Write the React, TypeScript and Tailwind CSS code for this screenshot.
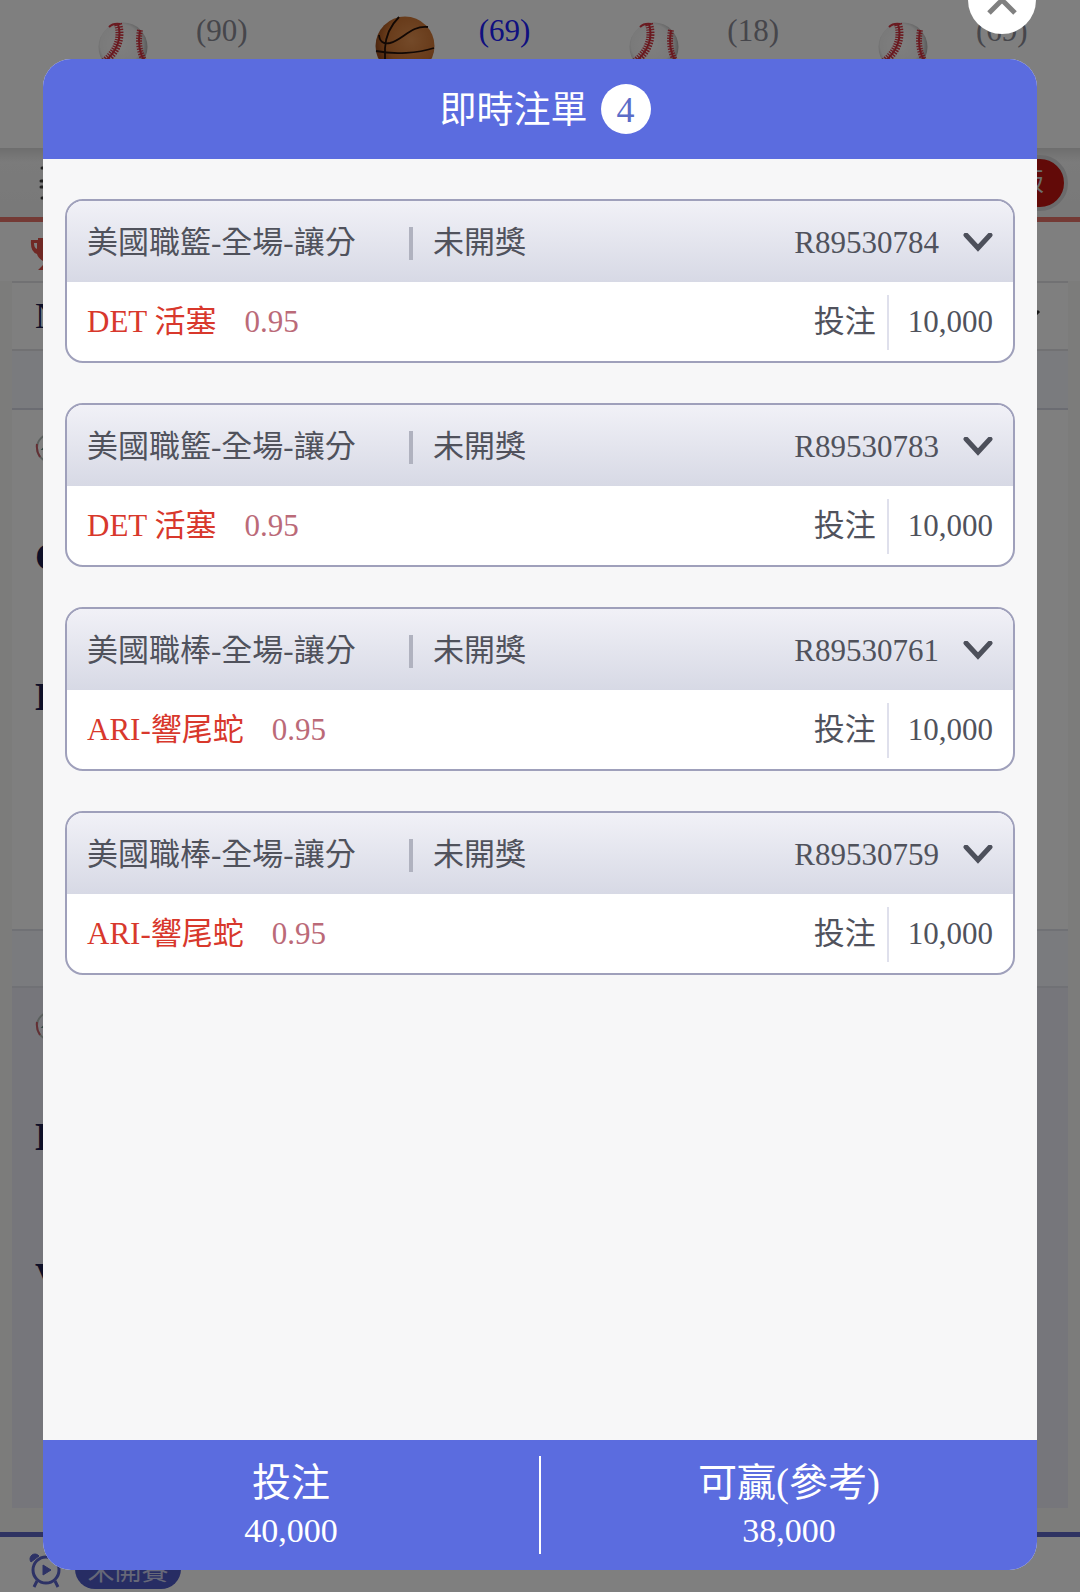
import React from "react";

const bets = [
  { id: "R89530784", title: "美國職籃-全場-讓分", team: "DET 活塞", odds: "0.95", amount: "10,000" },
  { id: "R89530783", title: "美國職籃-全場-讓分", team: "DET 活塞", odds: "0.95", amount: "10,000" },
  { id: "R89530761", title: "美國職棒-全場-讓分", team: "ARI-響尾蛇", odds: "0.95", amount: "10,000" },
  { id: "R89530759", title: "美國職棒-全場-讓分", team: "ARI-響尾蛇", odds: "0.95", amount: "10,000" },
];

function Baseball() {
  return (
    <svg viewBox="0 0 50 50" className="mt-[22px] size-[50px] shrink-0" aria-hidden="true">
      <defs>
        <radialGradient id="baseball" cx="45%" cy="45%" r="55%">
          <stop offset="0" stopColor="#fff" />
          <stop offset="0.75" stopColor="#f4f4f4" />
          <stop offset="1" stopColor="#b4b4b4" />
        </radialGradient>
      </defs>
      <circle cx="25" cy="25" r="24.5" fill="url(#baseball)" />
      <g fill="none" stroke="#d43440">
        <path d="M11 5 Q15 1 22 2" strokeWidth="2" />
        <path d="M20 2 C24 15 20 29 6 40" strokeWidth="2" />
        <path d="M20 2 C24 15 20 29 6 40" strokeWidth="8" strokeDasharray="1.4 1.2" />
        <path d="M42 8 C40 19 41 31 47 40" strokeWidth="2" />
        <path d="M42 8 C40 19 41 31 47 40" strokeWidth="6" strokeDasharray="1.4 1.2" />
      </g>
    </svg>
  );
}

function Basketball() {
  return (
    <svg viewBox="0 0 60 60" className="mt-4 size-[60px] shrink-0" aria-hidden="true">
      <defs>
        <radialGradient id="basketball" cx="60%" cy="40%" r="60%">
          <stop offset="0" stopColor="#e89452" />
          <stop offset="0.7" stopColor="#d07634" />
          <stop offset="1" stopColor="#9a4c1c" />
        </radialGradient>
      </defs>
      <circle cx="30" cy="30" r="29.5" fill="url(#basketball)" />
      <g fill="none" stroke="#241008" strokeWidth="1.8">
        <path d="M24 1 Q11 14 10 32 V52" />
        <path d="M4 19 Q5 29 15 27 C28 24 36 9 53 11" />
        <path d="M1 35 C20 39 43 37 59 32" />
      </g>
    </svg>
  );
}

function TeamLogo() {
  return (
    <svg viewBox="0 0 32 32" className="size-8" aria-hidden="true">
      <circle cx="16" cy="16" r="14" fill="none" stroke="#b4beba" strokeWidth="2" />
      <path d="M2 12 Q1 19 5 25" fill="none" stroke="#c85c66" strokeWidth="2" />
      <path d="M16 9 L8 17 H14" fill="none" stroke="#6c9088" strokeWidth="2" />
    </svg>
  );
}

const sports = [
  { count: "(90)", ball: "baseball" },
  { count: "(69)", ball: "basketball" },
  { count: "(18)", ball: "baseball" },
  { count: "(69)", ball: "baseball" },
];

function SportTab({ count, ball }: { count: string; ball: string }) {
  const active = ball === "basketball";
  return (
    <div className={active ? "ml-7 flex gap-11" : "flex gap-12"}>
      {active ? <Basketball /> : <Baseball />}
      <span
        className={
          active
            ? "mt-[13px] text-[31px] leading-9 text-[#2020ff]"
            : "mt-[13px] text-[31px] leading-9 text-[#8c8c96]"
        }
      >
        {count}
      </span>
    </div>
  );
}

function Team({ name, className }: { name: string; className: string }) {
  return <div className={`${className} text-[40px] leading-[46px] font-bold text-[#1c2050]`}>{name}</div>;
}

// page behind the dialog
function Backdrop() {
  return (
    <div className="flex min-h-screen flex-col bg-[#f8f8f6]" aria-hidden="true">
      <div className="flex h-[148px] gap-[99px] overflow-hidden bg-white pl-[98px]">
        {sports.map((s, i) => (
          <SportTab key={i} count={s.count} ball={s.ball} />
        ))}
      </div>
      <div className="flex h-[74px] items-center justify-between border-b-[5px] border-[#e8756a] bg-linear-to-b from-[#dcdcdc] via-[#f6f6f6] via-20% to-[#f2f2f2] pr-3 pl-[39px]">
        <svg viewBox="0 0 32 34" className="h-[34px] w-8" fill="none" stroke="#444" strokeWidth="3" strokeLinecap="round">
          <path d="M3 2H30M2 15H30M2 21H30M3 32H30" />
        </svg>
        <span className="flex h-14 items-center rounded-full border-4 border-[#d6d6d8] bg-[#c41410] pr-5 pl-5 text-[26px] text-[#ddd]">
          版
        </span>
      </div>
      <div className="h-[59px] bg-white px-[30px] pt-[15px]">
        <svg viewBox="0 0 34 34" className="size-[34px]" fill="#e0524a">
          <path d="M8 1H26V13Q24 22 19 24V28H24V33H8L13 28V24Q8 21 7 17Q0 15 1 3H8Z" />
          <path d="M4 6H7V12Q4 11 4 6Z" fill="#fff" />
        </svg>
      </div>
      <div className="mx-3 flex h-[70px] items-center justify-between border-y-2 border-[#e2e2e6] bg-white pr-[27px] pl-[23px]">
        <span className="text-[36px] text-[#1c2050]">N</span>
        <svg viewBox="0 0 24 14" className="h-3.5 w-6" fill="none" stroke="#333" strokeWidth="3">
          <path d="M2 2L12 12L22 2" />
        </svg>
      </div>
      <div className="mx-3 h-[59px] border-b-2 border-[#d6d8e4] bg-[#f4f6fc]" />
      <div className="mx-3 h-[519px] bg-[#fefefe] pt-[22px] pl-[23px]">
        <TeamLogo />
        <Team name="C" className="mt-[70px]" />
        <Team name="D" className="mt-[94px]" />
      </div>
      <div className="mx-3 h-[59px] border-y-2 border-[#e0e2ea] bg-[#f4f6fc]" />
      <div className="mx-3 h-[520px] bg-[#ededf6] pt-[22px] pl-[23px]">
        <TeamLogo />
        <Team name="D" className="mt-[72px]" />
        <Team name="V" className="mt-[94px]" />
      </div>
      <div className="mt-6 flex flex-1 items-end gap-3 border-t-[5px] border-[#5e66c4] bg-white pb-[3px] pl-[29px]">
        <svg viewBox="0 0 34 36" className="h-9 w-[34px]" fill="none" stroke="#5a64cc" strokeWidth="3">
          <circle cx="17" cy="17" r="13" />
          <path d="M8 28L5 34M26 28L29 34" />
          <path d="M2 9A5 5 0 0 1 10 3ZM32 9A5 5 0 0 0 24 3Z" fill="#5a64cc" strokeWidth="1" />
          <path d="M14 12L22 17L14 22Z" fill="#5a64cc" strokeWidth="1" />
        </svg>
        <span className="flex h-10 w-[106px] items-center justify-center rounded-full bg-[#4e5ac8] pt-1 text-[27px] leading-9 text-[#ccd0f0]">
          未開賽
        </span>
      </div>
    </div>
  );
}

function BetCard({ bet }: { bet: (typeof bets)[number] }) {
  return (
    <li className="overflow-hidden rounded-[18px] border-2 border-[#9fa0bb] bg-white text-[31px] leading-9 text-[#50525c]">
      <div className="flex h-[81px] items-center bg-linear-to-b from-[#f1f1f7] to-[#d7d9e5] px-5 pt-[3px]">
        <h3 className="w-[322px]">{bet.title}</h3>
        <span className="h-[33px] w-1 bg-[#b0b2bf]" />
        <span className="ml-5">未開獎</span>
        <button type="button" className="ml-auto flex items-center gap-6">
          {bet.id}
          <svg
            viewBox="0 0 30 20"
            className="h-5 w-[30px]"
            fill="none"
            stroke="#4d505b"
            strokeWidth="5"
            strokeLinecap="round"
            aria-hidden="true"
          >
            <path d="M3 2L15 15L27 2" />
          </svg>
        </button>
      </div>
      <div className="flex h-[79px] items-center px-5 pt-px">
        <span className="text-[#d8382c]">{bet.team}</span>
        <span className="ml-7 text-[#bb6a78]">{bet.odds}</span>
        <span className="ml-auto">投注</span>
        <span className="mx-[11px] h-[55px] w-0.5 bg-[#dfe0ec]" />
        <span className="pl-2">{bet.amount}</span>
      </div>
    </li>
  );
}

function Total({ label, value }: { label: string; value: string }) {
  return (
    <div className="flex flex-1 flex-col items-center pt-1">
      <span className="text-[39px] leading-[48px]">{label}</span>
      <span className="text-[34px] leading-[48px]">{value}</span>
    </div>
  );
}

export default function App() {
  return (
    <div className="font-['Liberation_Serif','Noto_Sans_CJK_TC',serif]">
      <Backdrop />
      <div className="fixed inset-0 flex bg-black/50 px-[43px] pt-[59px] pb-[22px]">
        <section
          role="dialog"
          aria-labelledby="slip-title"
          className="flex flex-1 flex-col overflow-hidden rounded-[28px] bg-[#f7f7f8]"
        >
          <header className="flex h-[100px] items-center justify-center gap-[13px] bg-[#5b6cdf] pl-2.5 text-white">
            <h2 id="slip-title" className="pt-1 text-[37px]">
              即時注單
            </h2>
            <span className="flex size-[50px] items-center justify-center rounded-full bg-white pt-0.5 text-[36px] text-[#5b6cc8]">
              4
            </span>
          </header>
          <ul className="flex flex-1 flex-col gap-10 overflow-y-auto px-[22px] pt-10">
            {bets.map((bet) => (
              <BetCard key={bet.id} bet={bet} />
            ))}
          </ul>
          <footer className="flex h-[130px] items-center bg-[#5b6cdf] text-white">
            <Total label="投注" value="40,000" />
            <span className="h-[98px] w-0.5 bg-white" />
            <Total label="可贏(參考)" value="38,000" />
          </footer>
        </section>
        <button
          type="button"
          aria-label="關閉"
          className="absolute -top-[34px] right-11 flex size-[68px] items-center justify-center rounded-full bg-white"
        >
          <svg viewBox="0 0 30 30" className="size-[30px]" stroke="#808080" strokeWidth="5">
            <path d="M2 2L28 28M28 2L2 28" />
          </svg>
        </button>
      </div>
    </div>
  );
}
